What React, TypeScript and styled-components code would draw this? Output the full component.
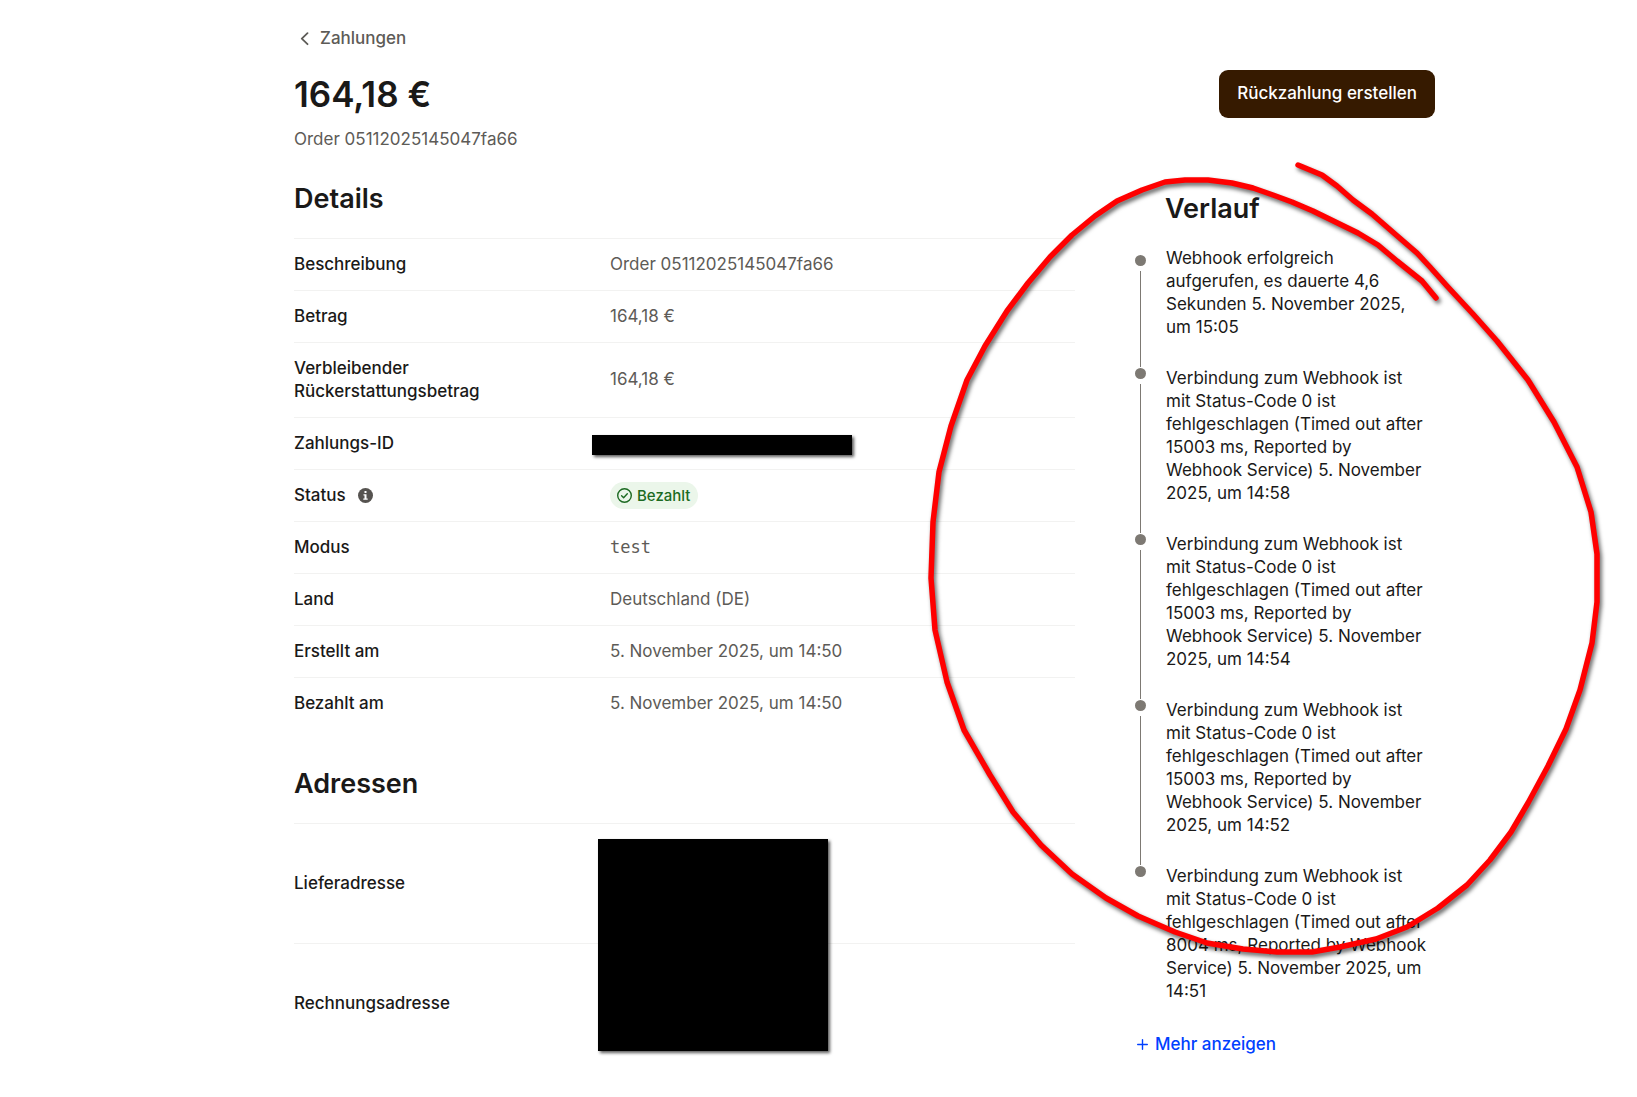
import React from "react";
import styled, { createGlobalStyle } from "styled-components";

const ink = "#1a1918";
const muted = "#5d5b57";
const rule = "#f2f2f1";
const marker = "#7d7973";

const GlobalStyle = createGlobalStyle`
  *, *::before, *::after { box-sizing: border-box; }
  body {
    margin: 0;
    background: #fff;
    color: ${ink};
    font-family: Inter, "Liberation Sans", sans-serif;
    font-size: 17px;
    line-height: 23px;
  }
`;

const Page = styled.main`
  padding: 27px 202px 32px 294px;
`;

const BackLink = styled.a`
  display: inline-flex;
  align-items: center;
  gap: 8px;
  padding-left: 4px;
  color: ${muted};
  font-weight: 500;
  text-decoration: none;
`;

const Header = styled.header`
  display: flex;
  justify-content: space-between;
  align-items: flex-start;
  margin-top: 18px;
`;

const Amount = styled.h1`
  margin: 0;
  font-size: 35px;
  line-height: 48px;
  font-weight: 600;
`;

const Subtitle = styled.p`
  margin: 10px 0 0;
  color: ${muted};
`;

const PrimaryButton = styled.button`
  height: 48px;
  padding: 0 18px;
  border: 0;
  border-radius: 9px;
  background: #361a00;
  color: #fff;
  font: inherit;
  font-weight: 500;
`;

const Columns = styled.div`
  display: grid;
  grid-template-columns: minmax(0, 1fr) 300px;
  column-gap: 60px;
  margin-top: 30px;
`;

const Section = styled.section`
  position: relative;
  & + & {
    margin-top: 37px;
  }
`;

const Heading = styled.h2`
  margin: 0;
  font-size: 27px;
  line-height: 36px;
  font-weight: 600;
`;

const Table = styled.table`
  width: 100%;
  margin-top: 21px;
  border-collapse: separate;
  border-spacing: 0;
  table-layout: fixed;
`;

const Label = styled.th`
  width: 316px;
  padding: 14px 24px 14px 0;
  border-top: 1px solid ${rule};
  font-weight: 500;
  text-align: left;
  vertical-align: middle;
`;

const Value = styled.td<{ $tall?: boolean }>`
  position: relative;
  height: ${(p) => (p.$tall ? "120px" : "auto")};
  padding: 0;
  border-top: 1px solid ${rule};
  color: ${muted};
`;

const LabelLine = styled.span`
  display: flex;
  align-items: center;
  gap: 12px;
`;

const Mono = styled.code`
  font-family: "DejaVu Sans Mono", monospace;
  font-size: 17px;
`;

const Badge = styled.span`
  display: inline-flex;
  align-items: center;
  gap: 5px;
  height: 27px;
  padding: 0 8px 0 7px;
  border-radius: 14px;
  background: #ebf6ea;
  color: #1c6a22;
  font-size: 15px;
  font-weight: 500;
  vertical-align: middle;
`;

const Redaction = styled.div<{ $x: number; $y: number; $w: number; $h: number }>`
  position: absolute;
  left: ${(p) => p.$x}px;
  top: ${(p) => p.$y}px;
  width: ${(p) => p.$w}px;
  height: ${(p) => p.$h}px;
  background: #000;
  box-shadow: 2px 2px 3px rgba(0, 0, 0, 0.65);
`;

const History = styled.aside`
  position: relative;
  padding-top: 10px;
`;

const HistoryHeading = styled(Heading)`
  padding-left: 30px;
`;

const Timeline = styled.ol`
  margin: 20px 0 2px;
  padding: 0;
  list-style: none;
`;

const Event = styled.li`
  display: flex;
  gap: 20px;
`;

const Rail = styled.span<{ $first: boolean }>`
  display: flex;
  flex: none;
  flex-direction: column;
  align-items: center;
  gap: 5px;
  width: 11px;
  padding-top: ${(p) => (p.$first ? 8 : 1)}px;
`;

const Dot = styled.span`
  flex: none;
  width: 11px;
  height: 11px;
  border-radius: 50%;
  background: ${marker};
`;

const Line = styled.span`
  flex: 1;
  width: 1px;
  background: ${marker};
`;

const EventText = styled.p`
  flex: 1;
  margin: 0;
  padding: 0 6px 28px 0;
`;

const MoreButton = styled.button`
  display: flex;
  align-items: center;
  gap: 7px;
  padding: 0 0 0 2px;
  border: 0;
  background: none;
  color: #0040ff;
  font: inherit;
  font-weight: 500;
`;

const Scribble = styled.svg`
  position: absolute;
  left: -215px;
  top: -26px;
  pointer-events: none;
  filter: drop-shadow(2px 3px 2px rgba(0, 0, 0, 0.6));
`;

const InfoIcon = () => (
  <svg width="15" height="15" viewBox="0 0 15 15" role="img" aria-label="Info">
    <circle cx="7.5" cy="7.5" r="7.5" fill="#565350" />
    <path d="M6.5 3h2v2h-2zM5.5 6.2h3v4.3h1.2v1.3H5.3v-1.3h1.2v-3h-1z" fill="#fff" />
  </svg>
);

const CheckIcon = () => (
  <svg width="15" height="15" viewBox="0 0 15 15" fill="none" stroke="currentColor" strokeWidth="1.4" strokeLinecap="round" strokeLinejoin="round" aria-hidden="true">
    <circle cx="7.5" cy="7.5" r="6.8" />
    <path d="M4.6 7.8l2 1.9 3.7-4" />
  </svg>
);

const ChevronIcon = () => (
  <svg width="14" height="14" viewBox="0 0 14 14" fill="none" stroke="currentColor" strokeWidth="1.8" strokeLinecap="round" strokeLinejoin="round" aria-hidden="true">
    <path d="M9.5 1.2L3.8 6.7l5.7 5.5" />
  </svg>
);

const PlusIcon = () => (
  <svg width="11" height="11" viewBox="0 0 11 11" stroke="currentColor" strokeWidth="1.4" strokeLinecap="round" aria-hidden="true">
    <path d="M5.5 .7v9.6M.7 5.5h9.6" />
  </svg>
);

type Detail = { label: string; value?: React.ReactNode; info?: boolean };

const details: Detail[] = [
  { label: "Beschreibung", value: "Order 05112025145047fa66" },
  { label: "Betrag", value: "164,18 €" },
  { label: "Verbleibender Rückerstattungsbetrag", value: "164,18 €" },
  { label: "Zahlungs-ID", value: <Redaction $x={-18} $y={17} $w={260} $h={20} /> },
  { label: "Status", info: true, value: <Badge><CheckIcon />Bezahlt</Badge> },
  { label: "Modus", value: <Mono>test</Mono> },
  { label: "Land", value: "Deutschland (DE)" },
  { label: "Erstellt am", value: "5. November 2025, um 14:50" },
  { label: "Bezahlt am", value: "5. November 2025, um 14:50" },
];

const addresses = ["Lieferadresse", "Rechnungsadresse"];

const failed = (ms: number, time: string) =>
  `Verbindung zum Webhook ist mit Status-Code 0 ist fehlgeschlagen (Timed out after ${ms} ms, Reported by Webhook Service) 5. November 2025, um ${time}`;

const events = [
  "Webhook erfolgreich aufgerufen, es dauerte 4,6 Sekunden 5. November 2025, um 15:05",
  failed(15003, "14:58"),
  failed(15003, "14:54"),
  failed(15003, "14:52"),
  failed(8004, "14:51"),
];

const strokePoints =
  "1298,165 1322,175 1337,186 1353,200 1372,214 1395,234 1417,253 1430,267 1447,286 1473,314 1497,341 1528,380 1554,422 1577,467 1591,512 1597,554 1597,602 1592,643 1580,690 1566,729 1548,766 1528,803 1511,832 1490,860 1467,885 1438,908 1407,927 1376,939 1340,947 1312,952 1277,952 1243,949 1207,943 1175,932 1138,916 1106,898 1072,874 1041,845 1013,812 990,775 964,730 947,682 935,630 931,578 933,522 939,472 951,426 967,380 985,346 1007,311 1028,283 1050,257 1072,235 1095,216 1117,201 1142,190 1165,182 1185,180 1208,180 1232,183 1253,188 1273,195 1292,202 1313,211 1358,233 1378,245 1397,261 1422,281 1436,298";

export default function App() {
  return (
    <>
      <GlobalStyle />
      <Page>
        <BackLink href="#zahlungen">
          <ChevronIcon />
          Zahlungen
        </BackLink>
        <Header>
          <div>
            <Amount>164,18 €</Amount>
            <Subtitle>Order 05112025145047fa66</Subtitle>
          </div>
          <PrimaryButton type="button">Rückzahlung erstellen</PrimaryButton>
        </Header>
        <Columns>
          <div>
            <Section>
              <Heading>Details</Heading>
              <Table>
                <tbody>
                  {details.map((d) => (
                    <tr key={d.label}>
                      <Label scope="row">
                        <LabelLine>
                          {d.label}
                          {d.info && <InfoIcon />}
                        </LabelLine>
                      </Label>
                      <Value>{d.value}</Value>
                    </tr>
                  ))}
                </tbody>
              </Table>
            </Section>
            <Section>
              <Heading>Adressen</Heading>
              <Table>
                <tbody>
                  {addresses.map((label) => (
                    <tr key={label}>
                      <Label scope="row">{label}</Label>
                      <Value $tall />
                    </tr>
                  ))}
                </tbody>
              </Table>
              <Redaction $x={304} $y={73} $w={230} $h={212} />
            </Section>
          </div>
          <History>
            <HistoryHeading>Verlauf</HistoryHeading>
            <Timeline>
              {events.map((text, i) => (
                <Event key={text}>
                  <Rail $first={i === 0}>
                    <Dot />
                    {i < events.length - 1 && <Line />}
                  </Rail>
                  <EventText>{text}</EventText>
                </Event>
              ))}
            </Timeline>
            <MoreButton type="button">
              <PlusIcon />
              Mehr anzeigen
            </MoreButton>
            <Scribble width="690" height="810" viewBox="920 155 690 810" aria-hidden="true">
              <polyline points={strokePoints} fill="none" stroke="#ff0000" strokeWidth="5.5" strokeLinecap="round" strokeLinejoin="round" />
            </Scribble>
          </History>
        </Columns>
      </Page>
    </>
  );
}
